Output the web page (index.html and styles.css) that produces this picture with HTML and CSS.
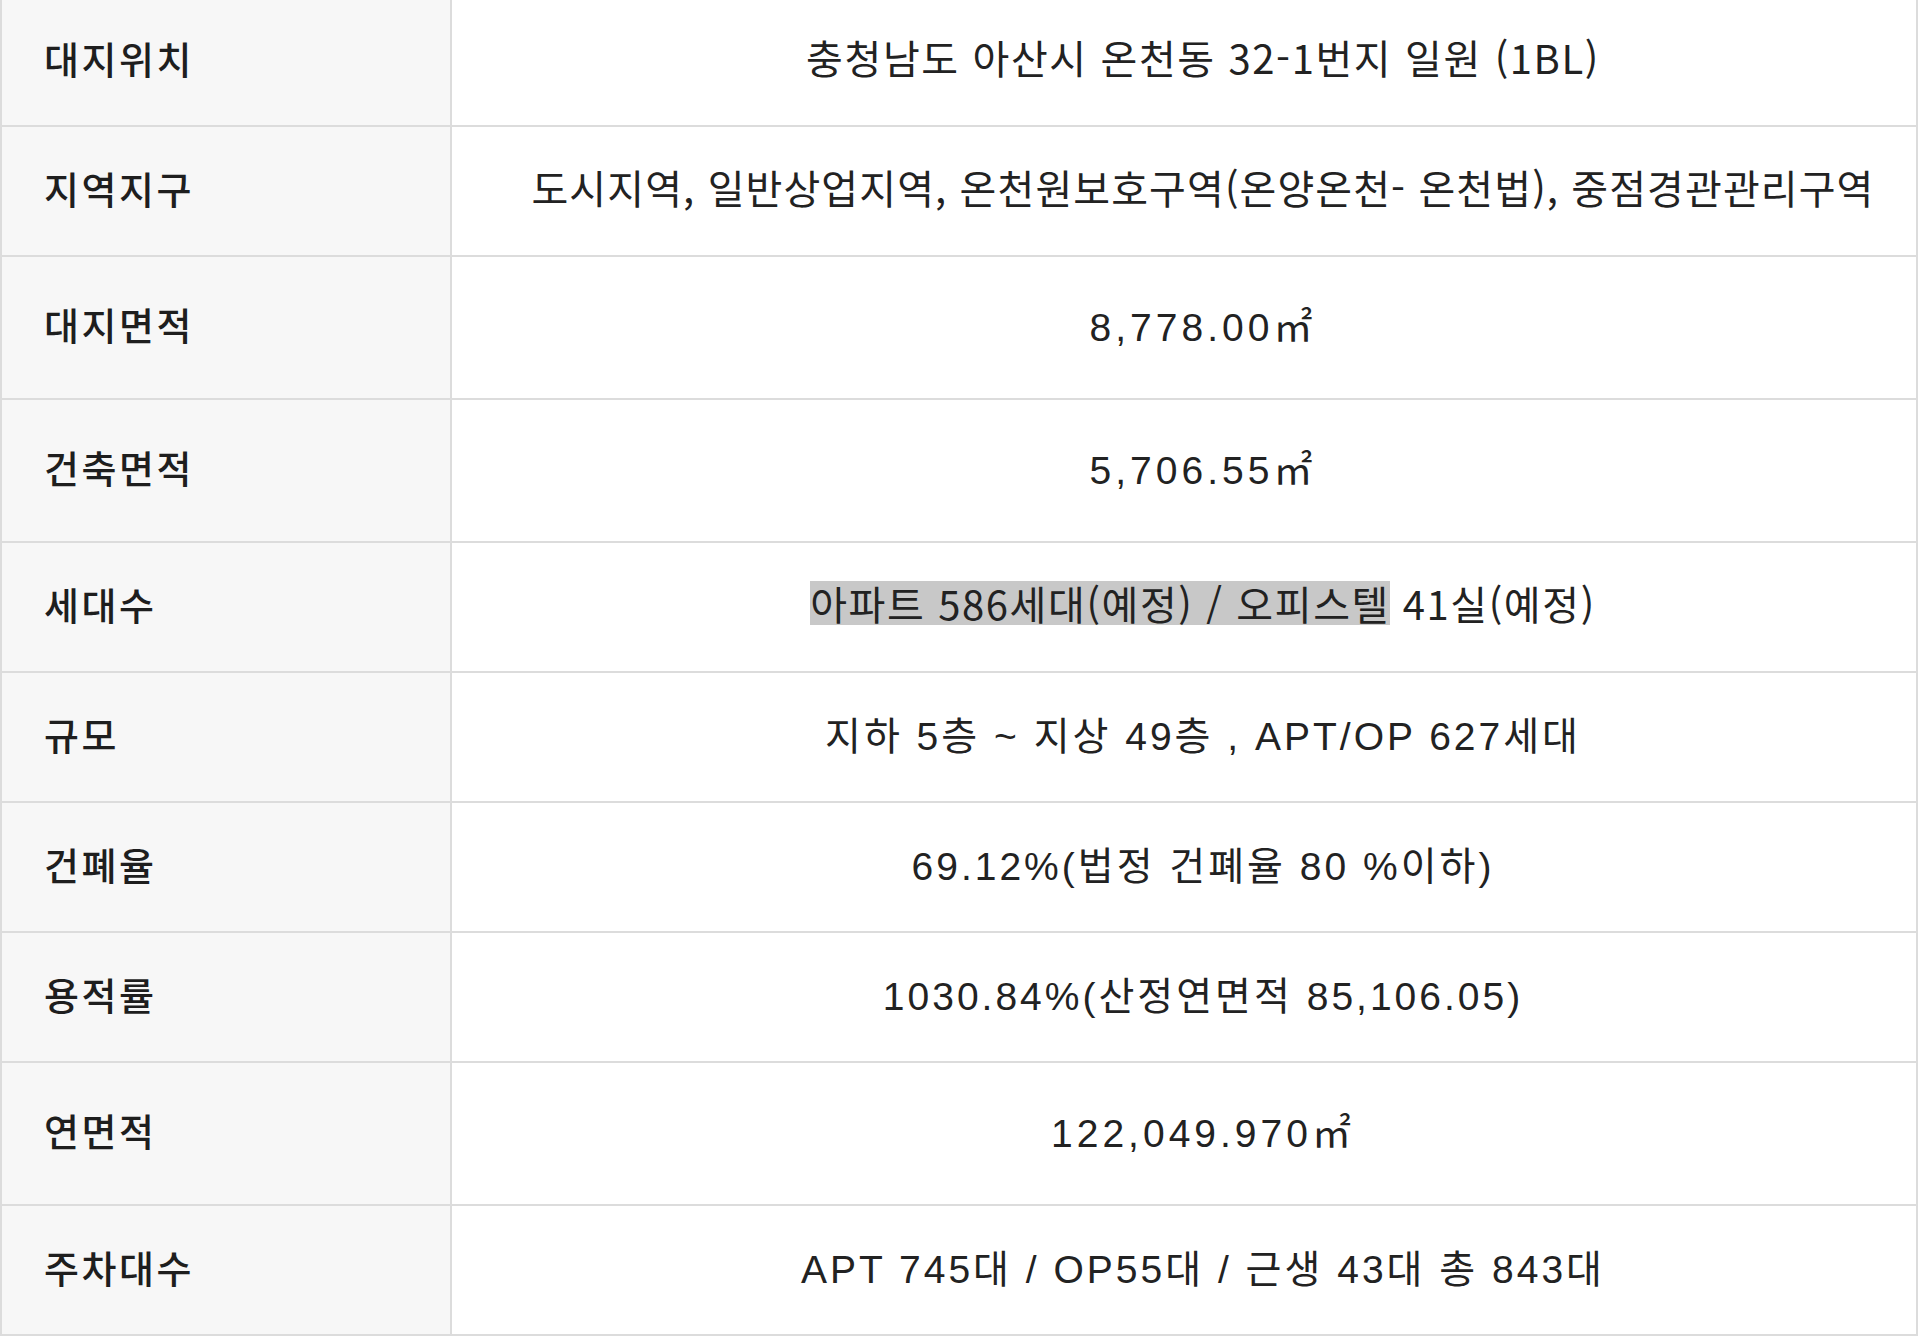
FILE: index.html
```html
<!DOCTYPE html>
<html lang="ko">
<head>
<meta charset="utf-8">
<title>사업개요</title>
<link rel="stylesheet" href="styles.css">
</head>
<body>
<table class="info">
  <tbody>
    <tr><th>대지위치</th><td class="tight">충청남도 아산시 온천동 32-1번지 일원 (1BL)</td></tr>
    <tr><th>지역지구</th><td class="tight long">도시지역, 일반상업지역, 온천원보호구역(온양온천- 온천법), 중점경관관리구역</td></tr>
    <tr class="tall"><th>대지면적</th><td class="num">8,778.00㎡</td></tr>
    <tr class="tall"><th>건축면적</th><td class="num">5,706.55㎡</td></tr>
    <tr><th>세대수</th><td class="tight"><span class="hl">아파트 586세대(예정) / 오피스텔</span> 41실(예정)</td></tr>
    <tr><th>규모</th><td class="wide">지하 5층 ~ 지상 49층 , APT/OP 627세대</td></tr>
    <tr><th>건폐율</th><td class="wide">69.12%(법정 건폐율 80 %이하)</td></tr>
    <tr><th>용적률</th><td class="wide">1030.84%(산정연면적 85,106.05)</td></tr>
    <tr class="tall"><th>연면적</th><td class="num">122,049.970㎡</td></tr>
    <tr><th>주차대수</th><td class="wide">APT 745대 / OP55대 / 근생 43대 총 843대</td></tr>
  </tbody>
</table>
</body>
</html>
```
FILE: styles.css
```css
html, body {
  margin: 0;
  padding: 0;
  background: #ffffff;
}
body {
  font-family: "Liberation Sans", "Noto Sans CJK KR", sans-serif;
  color: #222222;
}
.info {
  width: 1918px;
  margin-top: -5px;
  border-collapse: collapse;
  table-layout: fixed;
}
.info th,
.info td {
  border: 2px solid #dcdcdc;
  height: 120px;
  padding: 0 0 8px 0;
  vertical-align: middle;
  white-space: nowrap;
}
.info tr.tall th,
.info tr.tall td {
  height: 133px;
}
.info th {
  width: 406px;
  padding-left: 42px;
  background: #f7f7f7;
  text-align: left;
  font-family: "Noto Sans CJK KR", sans-serif;
  font-weight: 500;
  font-size: 38px;
  letter-spacing: 2.5px;
  color: #1e1e1e;
}
.info td {
  padding-left: 76px;
  padding-right: 38px;
  text-align: center;
  font-size: 39px;
  color: #222222;
}
.info td.tight {
  font-family: "Noto Sans CJK KR", sans-serif;
  font-size: 40px;
  letter-spacing: 1.6px;
}
.info td.long {
  letter-spacing: 1.1px;
}
.info td.wide {
  letter-spacing: 3px;
}
.info td.num {
  letter-spacing: 4px;
}
.hl {
  display: inline-block;
  line-height: 44px;
  background: #c8c8c8;
}
```
